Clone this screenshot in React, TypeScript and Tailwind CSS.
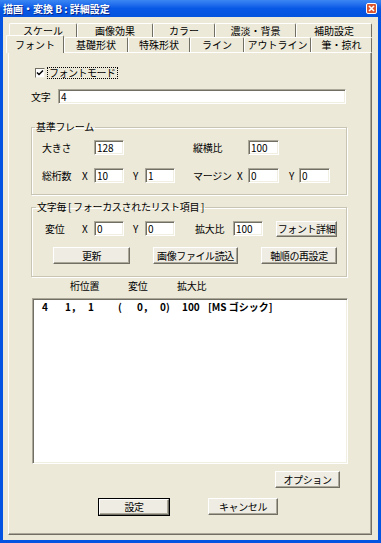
import React from 'react';

const font = "font-['Noto_Sans_CJK_JP','Noto_Sans',sans-serif]";

const Tab: React.FC<{ label: string; className: string }> = ({ label, className }) => (
    <div className={`flex items-center justify-center whitespace-nowrap border-t border-l border-r border-t-white border-l-white border-r-[#716f64] rounded-t-[2px] text-[10px] leading-none ${className}`}>
        {label}
    </div>
);

const Field: React.FC<{ value: string; className: string }> = ({ value, className }) => (
    <div className={`flex h-[15px] items-center bg-white border border-t-[#aca899] border-l-[#aca899] border-b-white border-r-white shadow-[inset_1px_1px_0_#716f64,inset_-1px_-1px_0_#f1efe2] pl-[2px] text-[10px] leading-none ${className}`}>
        {value}
    </div>
);

const Button: React.FC<{ label: string; className: string }> = ({ label, className }) => (
    <div className={`flex items-center justify-center whitespace-nowrap tracking-[-0.4px] bg-[#efede3] border border-t-white border-l-white border-r-[#716f64] border-b-[#716f64] shadow-[inset_-1px_-1px_0_#aca899] text-[10px] leading-none ${className}`}>
        {label}
    </div>
);

const Label: React.FC<{ text: string; className: string }> = ({ text, className }) => (
    <span className={`shrink-0 whitespace-nowrap tracking-[-0.3px] text-[10px] leading-none ${className}`}>{text}</span>
);

export default function App() {
    return (
        <div className={`flex flex-col w-[381px] h-[543px] bg-[#0553e1] text-black ${font}`}>
            {/* Title bar */}
            <div className="flex h-[17px] items-center justify-between bg-gradient-to-b from-[#3b86f3] via-[#0858e6] to-[#0453de] pl-[3px] pr-[4px]">
                <span className="text-[10px] font-bold leading-none text-white whitespace-pre [text-shadow:1px_1px_0_#0a2a8a]">
                    描画・変換 B : 詳細設定
                </span>
                <div className="flex w-[11px] h-[11px] items-center justify-center rounded-[2px] border border-white bg-[#d9542f]">
                    <svg width="7" height="7" viewBox="0 0 7 7">
                        <path d="M1 1 L6 6 M6 1 L1 6" stroke="white" strokeWidth="1.6" />
                    </svg>
                </div>
            </div>

            {/* Body */}
            <div className="flex flex-col mx-[3px] w-[375px] h-[523px] bg-[#ece9d8] pt-[6px]">
                {/* back tab row */}
                <div className="flex h-[14px] pl-[6px]">
                    <Tab label="スケール" className="w-[68px] h-[14px]" />
                    <Tab label="画像効果" className="w-[76px] h-[14px]" />
                    <Tab label="カラー" className="w-[62px] h-[14px]" />
                    <Tab label="濃淡・背景" className="w-[81px] h-[14px]" />
                    <Tab label="補助設定" className="w-[76px] h-[14px]" />
                </div>
                {/* front tab row */}
                <div className="flex h-[15px] items-end pl-[3px]">
                    <Tab label="フォント" className="relative z-10 w-[58px] h-[18px] -mb-px bg-[#ece9d8]" />
                    <Tab label="基礎形状" className="w-[64px] h-[15px]" />
                    <Tab label="特殊形状" className="w-[62px] h-[15px]" />
                    <Tab label="ライン" className="w-[54px] h-[15px]" />
                    <Tab label="アウトライン" className="w-[67px] h-[15px]" />
                    <Tab label="筆・掠れ" className="w-[61px] h-[15px]" />
                </div>

                {/* Panel */}
                <div className="flex flex-col items-start ml-[5px] w-[364px] h-[483px] border border-t-white border-l-white border-r-[#716f64] border-b-[#716f64] shadow-[inset_-1px_-1px_0_#aca899]">
                    {/* font mode */}
                    <div className="flex h-[12px] items-center mt-[14px] ml-[26px]">
                        <div className="flex w-[10px] h-[10px] items-center justify-center bg-white border border-t-[#716f64] border-l-[#716f64] border-b-[#f1efe2] border-r-[#f1efe2]">
                            <svg width="8" height="8" viewBox="0 0 8 8">
                                <path d="M1 3.5 L3 5.5 L7 1.5" stroke="black" strokeWidth="1.5" fill="none" />
                            </svg>
                        </div>
                        <span className="ml-[2px] flex h-[12px] items-center border border-dotted border-black px-[1px] text-[10px] leading-none tracking-[-0.5px] whitespace-nowrap">
                            フォントモード
                        </span>
                    </div>

                    {/* 文字 */}
                    <div className="flex h-[15px] items-center mt-[10px] ml-[22px]">
                        <Label text="文字" className="w-[27px]" />
                        <Field value="4" className="w-[288px]" />
                    </div>

                    {/* 基準フレーム */}
                    <fieldset className="mt-[17px] ml-[22px] w-[316px] h-[74px] border border-[#c8c5b4] shadow-[inset_1px_1px_0_white,1px_1px_0_white]">
                        <legend className="ml-[3px] px-[1px] text-[10px] leading-[12px] tracking-[-0.3px]">基準フレーム</legend>
                        <div className="flex h-[15px] items-center mt-[7px] ml-[10px]">
                            <Label text="大きさ" className="w-[52px]" />
                            <Field value="128" className="w-[30px]" />
                            <Label text="縦横比" className="ml-[69px] w-[55px]" />
                            <Field value="100" className="w-[31px]" />
                        </div>
                        <div className="flex h-[15px] items-center mt-[13px] ml-[10px]">
                            <Label text="総桁数" className="w-[40px]" />
                            <Label text="X" className="w-[12px]" />
                            <Field value="10" className="w-[30px]" />
                            <Label text="Y" className="ml-[9px] w-[12px]" />
                            <Field value="1" className="w-[30px]" />
                            <Label text="マージン" className="ml-[18px] w-[44px]" />
                            <Label text="X" className="w-[11px]" />
                            <Field value="0" className="w-[31px]" />
                            <Label text="Y" className="ml-[10px] w-[10px]" />
                            <Field value="0" className="w-[31px]" />
                        </div>
                    </fieldset>

                    {/* 文字毎 */}
                    <fieldset className="mt-[6px] ml-[22px] w-[316px] h-[76px] border border-[#c8c5b4] shadow-[inset_1px_1px_0_white,1px_1px_0_white]">
                        <legend className="ml-[4px] px-[1px] text-[10px] leading-[12px] tracking-[-0.3px] whitespace-pre">文字毎 [ フォーカスされたリスト項目 ]</legend>
                        <div className="flex h-[15px] items-center mt-[8px] ml-[13px]">
                            <Label text="変位" className="w-[37px]" />
                            <Label text="X" className="w-[12px]" />
                            <Field value="0" className="w-[30px]" />
                            <Label text="Y" className="ml-[9px] w-[12px]" />
                            <Field value="0" className="w-[30px]" />
                            <Label text="拡大比" className="ml-[20px] w-[38px]" />
                            <Field value="100" className="w-[30px]" />
                            <Button label="フォント詳細" className="ml-[13px] w-[61px] h-[16px]" />
                        </div>
                        <div className="flex h-[17px] items-center mt-[11px] ml-[21px]">
                            <Button label="更新" className="w-[77px] h-[17px]" />
                            <Button label="画像ファイル読込" className="ml-[23px] w-[85px] h-[17px]" />
                            <Button label="軸順の再設定" className="ml-[23px] w-[76px] h-[17px]" />
                        </div>
                    </fieldset>

                    {/* list headers */}
                    <div className="flex h-[12px] items-center mt-[3px] ml-[61px]">
                        <Label text="桁位置" className="w-[58px]" />
                        <Label text="変位" className="w-[49px]" />
                        <Label text="拡大比" className="w-[40px]" />
                    </div>

                    {/* list */}
                    <div className="mt-[6px] ml-[23px] w-[316px] h-[166px] bg-white border border-t-[#aca899] border-l-[#aca899] border-b-white border-r-white shadow-[inset_1px_1px_0_#716f64,inset_-1px_-1px_0_#f1efe2]">
                        <div className="flex h-[12px] items-center mt-[2px] pl-[9px] text-[10px] font-bold leading-none whitespace-pre">
                            <span className="w-[23px]">4</span>
                            <span className="w-[23px]">1，</span>
                            <span className="w-[30px]">1</span>
                            <span className="w-[19px]">(</span>
                            <span className="w-[23px]">0，</span>
                            <span className="w-[22px]">0)</span>
                            <span className="w-[26px]">100</span>
                            <span>[MS ゴシック]</span>
                        </div>
                    </div>

                    {/* option */}
                    <Button label="オプション" className="mt-[7px] ml-[266px] w-[65px] h-[17px]" />

                    {/* OK / cancel */}
                    <div className="flex h-[17px] items-center mt-[10px] ml-[89px]">
                        <div className="border border-black">
                            <Button label="設定" className="w-[70px] h-[16px]" />
                        </div>
                        <Button label="キャンセル" className="ml-[38px] w-[70px] h-[17px]" />
                    </div>
                </div>
            </div>
        </div>
    );
}
